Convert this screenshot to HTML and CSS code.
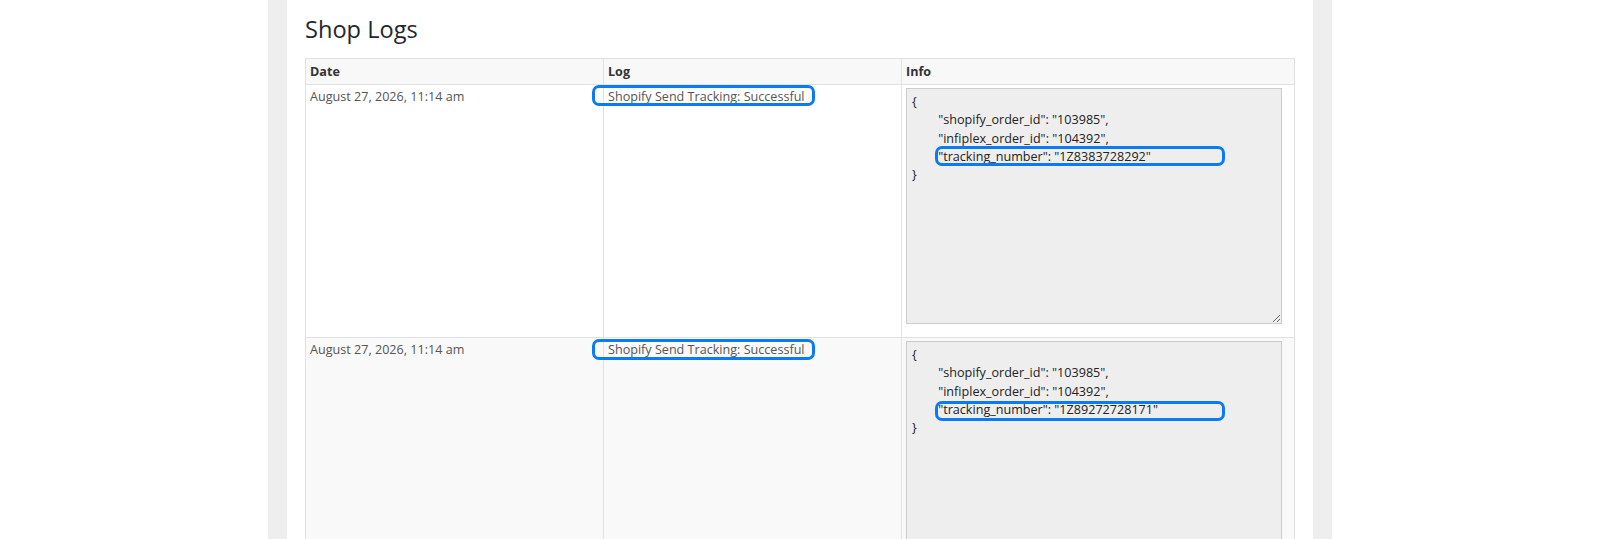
FILE: index.html
```html
<!DOCTYPE html>
<html lang="en">
<head>
  <meta charset="UTF-8" />
  <meta name="viewport" content="width=device-width, initial-scale=1.0" />
  <title>Shop Logs</title>
  <link rel="stylesheet" href="styles.css">
</head>
<body>
  <div class="wrap">
    <div class="panel">
      <h2>Shop Logs</h2>

      <!-- Log table -->
      <table class="logs">
        <thead>
          <tr>
            <th class="col-date">Date</th>
            <th class="col-log">Log</th>
            <th>Info</th>
          </tr>
        </thead>
        <tbody>
          <tr>
            <td>August 27, 2026, 11:14 am</td>
            <td class="log-cell">
              Shopify Send Tracking: Successful
              <span class="mark mark-log"></span>
            </td>
            <td class="info-cell">
              <textarea readonly>{
&#9;"shopify_order_id": "103985",
&#9;"infiplex_order_id": "104392",
&#9;"tracking_number": "1Z8383728292"
}</textarea>
              <span class="mark mark-track"></span>
            </td>
          </tr>
          <tr class="alt">
            <td>August 27, 2026, 11:14 am</td>
            <td class="log-cell">
              Shopify Send Tracking: Successful
              <span class="mark mark-log mark-log-2"></span>
            </td>
            <td class="info-cell">
              <textarea readonly>{
&#9;"shopify_order_id": "103985",
&#9;"infiplex_order_id": "104392",
&#9;"tracking_number": "1Z89272728171"
}</textarea>
              <span class="mark mark-track mark-track-2"></span>
            </td>
          </tr>
        </tbody>
      </table>
    </div>
  </div>
</body>
</html>
```

FILE: styles.css
```css
/* Global styles */
body {
  margin: 0;
  background: #fff;
  color: #555;
  font-family: "Open Sans", "Liberation Sans", sans-serif;
  overflow: hidden;
}
/* Grey frame round the white panel */
.wrap {
  width: 1064px;
  margin: 0 auto;
  padding: 0 19px;
  box-sizing: border-box;
  background: #eeeeee;
}
.panel {
  background: #fff;
  padding: 13px 18px 0;
  min-height: 539px;
}
h2 {
  margin: 0 0 13px;
  font-size: 23.6px;
  font-weight: 400;
  color: #23282d;
}
/* Log table */
.logs {
  width: 100%;
  table-layout: fixed;
  border-collapse: collapse;
  border: 1px solid #e1e1e1;
  font-size: 12.6px;
  line-height: 18px;
}
.logs th,
.logs td {
  text-align: left;
  vertical-align: top;
  padding: 3px 4px;
  border-left: 1px solid #e1e1e1;
}
.logs th {
  padding-top: 4px;
  background: #f8f8f8;
  color: #333;
  font-weight: 700;
  border-bottom: 1px solid #e1e1e1;
}
.logs td {
  position: relative;
  border-bottom: 1px solid #e1e1e1;
}
.col-date { width: 289px; }
.col-log { width: 289px; }
.logs tr.alt td {
  background: #f9f9f9;
}
.info-cell textarea {
  display: block;
  width: 376px;
  height: 236px;
  box-sizing: border-box;
  margin: 0 0 10px;
  padding: 4px 5px;
  border: 1px solid #ccc;
  background: #eee;
  color: #222;
  font-family: "Open Sans", "Liberation Sans", sans-serif;
  font-size: 12.6px;
  line-height: 18.3px;
  tab-size: 8;
}
/* Blue highlight marks drawn over the cells */
.mark {
  position: absolute;
  box-sizing: border-box;
  border: 3px solid #0a7af5;
  border-radius: 7px;
}
.mark-log {
  left: -12px;
  top: 0;
  width: 223px;
  height: 21px;
}
.mark-log-2 { top: 1px; }
.mark-track {
  left: 33px;
  top: 61px;
  width: 290px;
  height: 20px;
}
.mark-track-2 { top: 63px; }
```
